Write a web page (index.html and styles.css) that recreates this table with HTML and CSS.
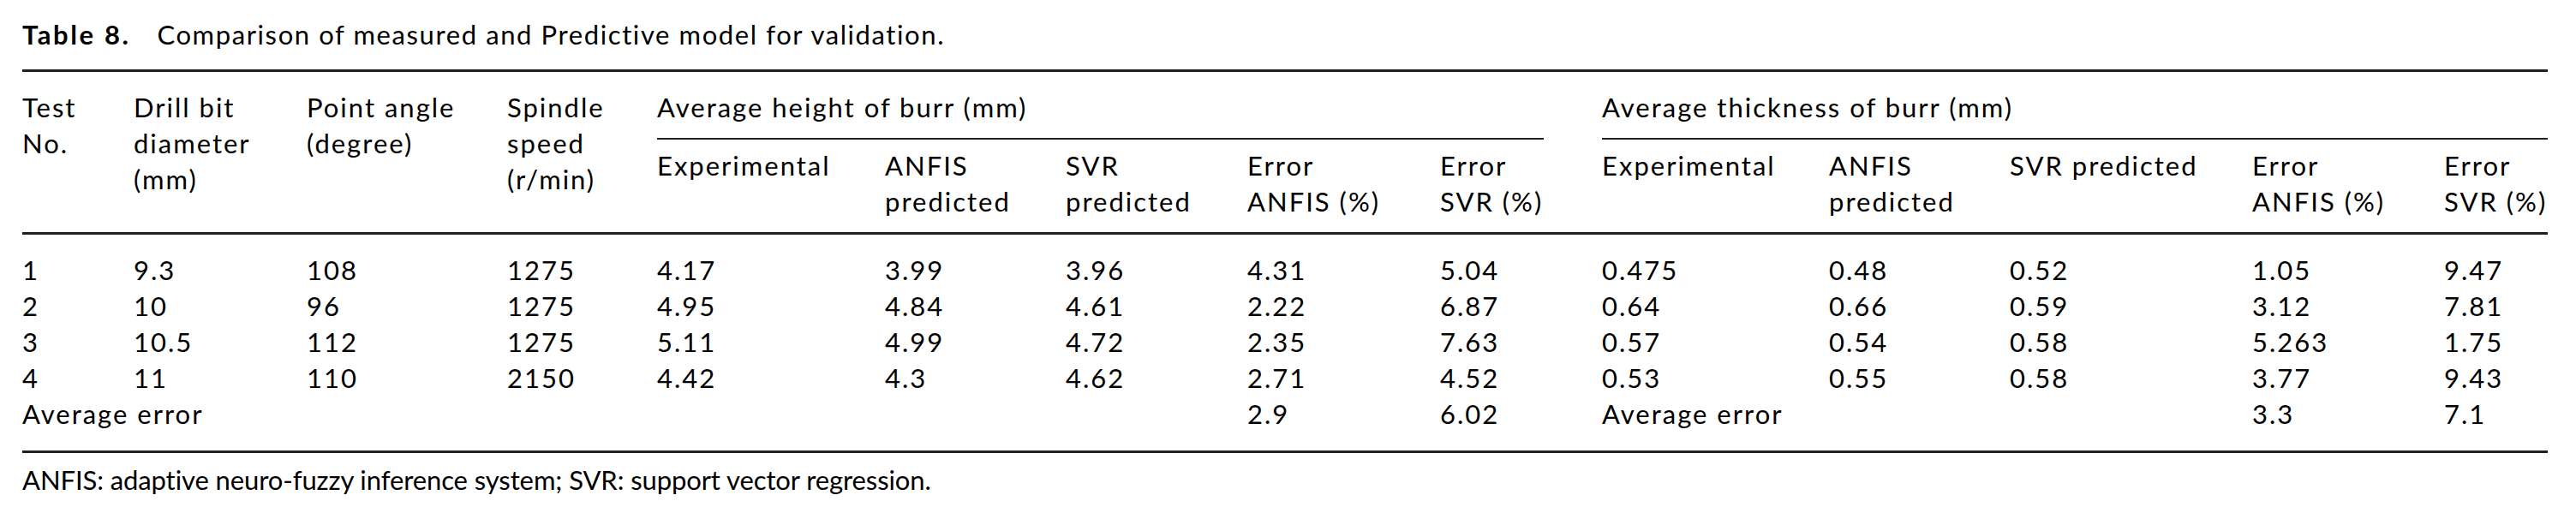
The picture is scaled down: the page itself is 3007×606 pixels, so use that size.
FILE: index.html
```html
<!DOCTYPE html>
<html lang="en">
<head>
<meta charset="utf-8">
<title>Table 8</title>
<link rel="stylesheet" href="styles.css">
</head>
<body>
<div class="page">
  <p class="caption"><span class="label">Table 8.</span>Comparison of measured and Predictive model for validation.</p>
  <table class="data">
    <colgroup>
      <col class="c1"><col class="c2"><col class="c3"><col class="c4">
      <col class="c5"><col class="c6"><col class="c7"><col class="c8"><col class="c9">
      <col class="c10"><col class="c11"><col class="c12"><col class="c13"><col class="c14">
    </colgroup>
    <thead>
      <tr class="h1">
        <th rowspan="2" class="span">Test<br>No.</th>
        <th rowspan="2" class="span">Drill bit<br>diameter<br>(mm)</th>
        <th rowspan="2" class="span">Point angle<br>(degree)</th>
        <th rowspan="2" class="span">Spindle<br>speed<br>(r/min)</th>
        <th colspan="5" class="group"><div class="group-label gap">Average height of burr (mm)</div></th>
        <th colspan="5" class="group"><div class="group-label">Average thickness of burr (mm)</div></th>
      </tr>
      <tr class="h2">
        <th>Experimental</th>
        <th>ANFIS<br>predicted</th>
        <th>SVR<br>predicted</th>
        <th>Error<br>ANFIS (%)</th>
        <th>Error<br>SVR (%)</th>
        <th>Experimental</th>
        <th>ANFIS<br>predicted</th>
        <th>SVR predicted</th>
        <th>Error<br>ANFIS (%)</th>
        <th>Error<br>SVR (%)</th>
      </tr>
    </thead>
    <tbody>
      <tr class="first">
        <td>1</td><td>9.3</td><td>108</td><td>1275</td>
        <td>4.17</td><td>3.99</td><td>3.96</td><td>4.31</td><td>5.04</td>
        <td>0.475</td><td>0.48</td><td>0.52</td><td>1.05</td><td>9.47</td>
      </tr>
      <tr>
        <td>2</td><td>10</td><td>96</td><td>1275</td>
        <td>4.95</td><td>4.84</td><td>4.61</td><td>2.22</td><td>6.87</td>
        <td>0.64</td><td>0.66</td><td>0.59</td><td>3.12</td><td>7.81</td>
      </tr>
      <tr>
        <td>3</td><td>10.5</td><td>112</td><td>1275</td>
        <td>5.11</td><td>4.99</td><td>4.72</td><td>2.35</td><td>7.63</td>
        <td>0.57</td><td>0.54</td><td>0.58</td><td>5.263</td><td>1.75</td>
      </tr>
      <tr>
        <td>4</td><td>11</td><td>110</td><td>2150</td>
        <td>4.42</td><td>4.3</td><td>4.62</td><td>2.71</td><td>4.52</td>
        <td>0.53</td><td>0.55</td><td>0.58</td><td>3.77</td><td>9.43</td>
      </tr>
      <tr class="last">
        <td colspan="4">Average error</td>
        <td></td><td></td><td></td><td>2.9</td><td>6.02</td>
        <td colspan="3">Average error</td>
        <td>3.3</td><td>7.1</td>
      </tr>
    </tbody>
  </table>
  <p class="note">ANFIS: adaptive neuro-fuzzy inference system; SVR: support vector regression.</p>
</div>
</body>
</html>
```

FILE: styles.css
```css
html, body {
  margin: 0;
  padding: 0;
  background: #ffffff;
}

body {
  font-family: "Lato", "Open Sans", sans-serif;
  font-size: 31px;
  line-height: 42px;
  color: #000000;
}

.page {
  padding: 19px 0 0 26px;
}

.caption {
  margin: 0;
  line-height: 42px;
  letter-spacing: 1.6px;
}

.caption .label {
  font-weight: 700;
  letter-spacing: 2.6px;
  margin-right: 31px;
}

.data {
  margin-top: 20px;
  border-collapse: separate;
  border-spacing: 0;
  table-layout: fixed;
  width: 2948px;
  border-top: 3px solid #231f20;
  letter-spacing: 2px;
}

.c1 { width: 130px; }
.c2 { width: 202px; }
.c3 { width: 234px; }
.c4 { width: 175px; }
.c5 { width: 266px; }
.c6 { width: 211px; }
.c7 { width: 212px; }
.c8 { width: 225px; }
.c9 { width: 189px; }
.c10 { width: 265px; }
.c11 { width: 211px; }
.c12 { width: 283px; }
.c13 { width: 224px; }
.c14 { width: 121px; }

.data th,
.data td {
  padding: 0;
  text-align: left;
  vertical-align: top;
  font-weight: 400;
  white-space: nowrap;
}

.h1 th {
  padding-top: 20px;
}

.h1 th.span {
  border-bottom: 3px solid #231f20;
}

.group-label {
  padding-bottom: 15px;
  border-bottom: 2px solid #231f20;
}

.group-label.gap {
  margin-right: 68px;
}

.h2 th {
  padding-top: 9px;
  padding-bottom: 15px;
  border-bottom: 3px solid #231f20;
}

.first td {
  padding-top: 20px;
}

.last td {
  padding-bottom: 22px;
  border-bottom: 3px solid #231f20;
}

.note {
  margin: 10px 0 0 0;
  line-height: 42px;
  letter-spacing: -0.1px;
}
```
